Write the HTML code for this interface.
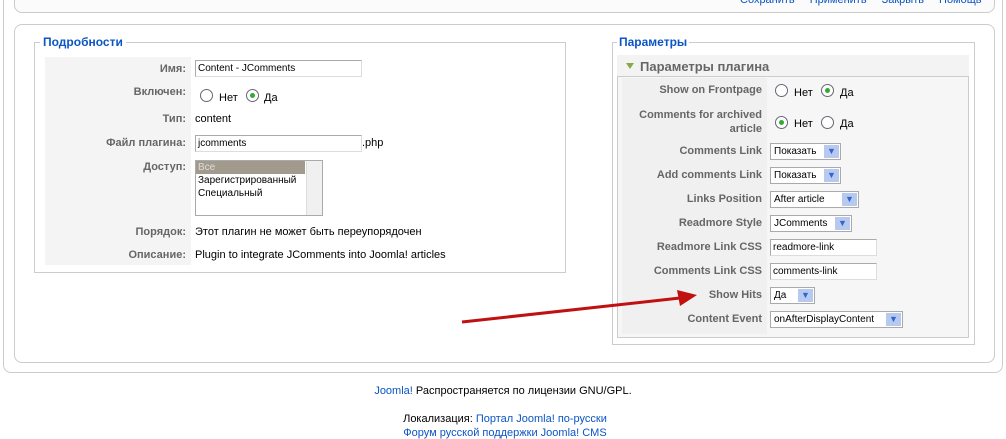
<!DOCTYPE html>
<html><head><meta charset="utf-8"><style>
*{box-sizing:border-box;margin:0;padding:0}
body{width:1006px;height:436px;background:#fff;font-family:"Liberation Sans",Tahoma,"Noto Sans CJK SC",sans-serif;font-size:11px;color:#333;position:relative;overflow:hidden}
.a{position:absolute}
.blue{color:#0B55C4}
.lbl{position:absolute;text-align:right;color:#666;font-weight:bold;font-size:11px}
.inp{position:absolute;border:1px solid #aaa;border-right-color:#ddd;border-bottom-color:#ddd;background:#fff;font-size:10px;padding:2px 2px;color:#000;height:17px;line-height:11px}
.sel{position:absolute;border:1px solid #aaa;background:#fff;font-size:10px;padding:2px 3px;height:17px;line-height:11px;color:#000}
.sel b{position:absolute;right:1px;top:1px;width:15px;height:13px;background:#b7c9ef;color:#36c;font-size:9px;text-align:center;line-height:13px}
.r{position:absolute;width:13px;height:13px;border-radius:50%;border:1px solid #667;background:#fff}
.r.on::after{content:"";position:absolute;left:3px;top:3px;width:5px;height:5px;border-radius:50%;background:#3a3}
.t{position:absolute;font-size:11px;color:#000}
</style></head><body>
<!-- top box -->
<div class="a" style="left:3px;top:-20px;width:1000px;height:393px;border:1px solid #ccc;border-radius:8px"></div>
<div class="a" style="left:14px;top:-20px;width:981px;height:33px;border:1px solid #ccc;border-radius:8px;background:#fbfbfb"></div>
<div class="a blue" style="left:740px;top:-6px;font-size:11px;word-spacing:12px">Сохранить Применить Закрыть Помощь</div>
<!-- main box -->
<div class="a" style="left:14px;top:24px;width:981px;height:339px;border:1px solid #ccc;border-radius:8px;background:#fff"></div>

<!-- left fieldset -->
<div class="a" style="left:34px;top:42px;width:532px;height:231px;border:1px solid #ccc"></div>
<div class="a blue" style="left:40px;top:35px;background:#fff;padding:0 3px;font-weight:bold;font-size:12px">Подробности</div>
<div class="a" style="left:45px;top:57px;width:146px;height:208px;background:#f4f4f4"></div>
<div class="lbl" style="left:45px;width:141px;top:63px">Имя:</div>
<div class="lbl" style="left:45px;width:141px;top:86px">Включен:</div>
<div class="lbl" style="left:45px;width:141px;top:113px">Тип:</div>
<div class="lbl" style="left:45px;width:141px;top:137px">Файл плагина:</div>
<div class="lbl" style="left:45px;width:141px;top:161px">Доступ:</div>
<div class="lbl" style="left:45px;width:141px;top:226px">Порядок:</div>
<div class="lbl" style="left:45px;width:141px;top:249px">Описание:</div>
<div class="inp" style="left:195px;top:60px;width:167px">Content - JComments</div>
<div class="r" style="left:200px;top:89px"></div><div class="t" style="left:219px;top:92px">Нет</div>
<div class="r on" style="left:246px;top:89px"></div><div class="t" style="left:264px;top:92px">Да</div>
<div class="t" style="left:195px;top:113px">content</div>
<div class="inp" style="left:195px;top:135px;width:167px">jcomments</div>
<div class="t" style="left:362px;top:137px">.php</div>
<div class="a" style="left:195px;top:160px;width:128px;height:56px;border:1px solid #aaa;background:#fff;font-size:10px;color:#000">
<div style="background:#a29a8c;color:#ddd;padding:1px 2px;width:109px">Все</div>
<div style="padding:1px 2px">Зарегистрированный</div>
<div style="padding:1px 2px">Специальный</div>
<div class="a" style="right:0;top:0;width:16px;height:54px;background:#f0f0f0;border-left:1px solid #ddd"></div>
</div>
<div class="t" style="left:195px;top:226px">Этот плагин не может быть переупорядочен</div>
<div class="t" style="left:195px;top:249px">Plugin to integrate JComments into Joomla! articles</div>

<!-- right fieldset -->
<div class="a" style="left:612px;top:42px;width:363px;height:303px;border:1px solid #ccc"></div>
<div class="a blue" style="left:617px;top:35px;background:#fff;padding:0 2px;font-weight:bold;font-size:12px">Параметры</div>
<div class="a" style="left:617px;top:55px;width:352px;height:283px;border:1px solid #ccc;background:#f6f6f6"></div>
<div class="a" style="left:617px;top:55px;width:352px;height:22px;border-bottom:1px solid #ccc;background:#f3f3f3"></div>
<div class="a" style="left:626px;top:63px;width:0;height:0;border-left:4px solid transparent;border-right:4px solid transparent;border-top:6px solid #8a4"></div>
<div class="a" style="left:640px;top:59px;font-weight:bold;font-size:13px;color:#666">Параметры плагина</div>
<div class="a" style="left:622px;top:78px;width:145px;height:256px;background:#f0f0f0"></div>
<div class="lbl" style="left:622px;width:140px;top:84px">Show on Frontpage</div>
<div class="lbl" style="left:622px;width:140px;top:108px;line-height:14px">Comments for archived article</div>
<div class="lbl" style="left:622px;width:140px;top:145px">Comments Link</div>
<div class="lbl" style="left:622px;width:140px;top:169px">Add comments Link</div>
<div class="lbl" style="left:622px;width:140px;top:193px">Links Position</div>
<div class="lbl" style="left:622px;width:140px;top:217px">Readmore Style</div>
<div class="lbl" style="left:622px;width:140px;top:241px">Readmore Link CSS</div>
<div class="lbl" style="left:622px;width:140px;top:265px">Comments Link CSS</div>
<div class="lbl" style="left:622px;width:140px;top:289px">Show Hits</div>
<div class="lbl" style="left:622px;width:140px;top:313px">Content Event</div>

<div class="r" style="left:775px;top:84px"></div><div class="t" style="left:794px;top:87px">Нет</div>
<div class="r on" style="left:821px;top:84px"></div><div class="t" style="left:840px;top:87px">Да</div>
<div class="r on" style="left:775px;top:116px"></div><div class="t" style="left:794px;top:118px">Нет</div>
<div class="r" style="left:821px;top:116px"></div><div class="t" style="left:840px;top:118px">Да</div>
<div class="sel" style="left:770px;top:143px;width:71px">Показать<b>▼</b></div>
<div class="sel" style="left:770px;top:167px;width:71px">Показать<b>▼</b></div>
<div class="sel" style="left:770px;top:191px;width:89px">After article<b>▼</b></div>
<div class="sel" style="left:770px;top:215px;width:82px">JComments<b>▼</b></div>
<div class="inp" style="left:770px;top:239px;width:107px">readmore-link</div>
<div class="inp" style="left:770px;top:263px;width:107px">comments-link</div>
<div class="sel" style="left:770px;top:287px;width:45px">Да<b>▼</b></div>
<div class="sel" style="left:770px;top:311px;width:133px">onAfterDisplayContent<b>▼</b></div>

<svg class="a" style="left:0;top:0" width="1006" height="436">
<line x1="462" y1="322" x2="680" y2="298" stroke="#c01010" stroke-width="3"/>
<polygon points="697,295 677,290 680,306" fill="#c01010"/>
</svg>

<div class="a" style="left:0;width:1006px;top:385px;text-align:center;font-size:11px;color:#000"><span class="blue">Joomla!</span> Распространяется по лицензии GNU/GPL.</div>
<div class="a" style="left:0;width:1010px;top:413px;text-align:center;font-size:11px;color:#000">Локализация: <span class="blue">Портал Joomla! по-русски</span></div>
<div class="a blue" style="left:0;width:1010px;top:427px;text-align:center;font-size:11px">Форум русской поддержки Joomla! CMS</div>
</body></html>
